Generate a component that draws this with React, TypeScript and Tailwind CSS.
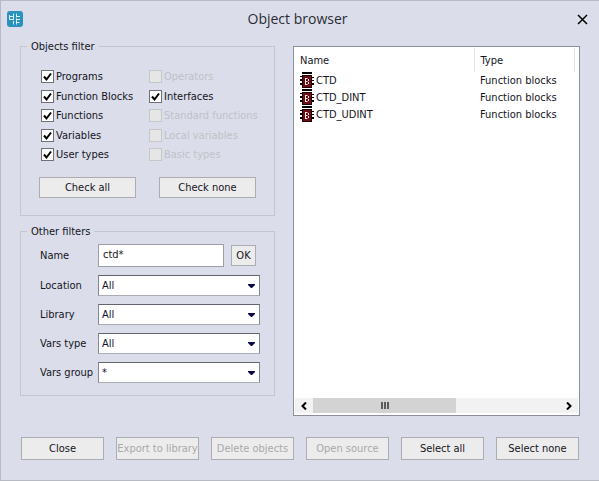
import { useState, type ReactNode } from "react";

const leftKinds = ["Programs", "Function Blocks", "Functions", "Variables", "User types"];
const rightKinds = ["Operators", "Interfaces", "Standard functions", "Local variables", "Basic types"];
const initiallyChecked = [...leftKinds, "Interfaces"];
const isAvailable = (kind: string) => initiallyChecked.includes(kind);

const objects = [
  { name: "CTD", type: "Function blocks" },
  { name: "CTD_DINT", type: "Function blocks" },
  { name: "CTD_UDINT", type: "Function blocks" },
];

const dropDowns = [
  { label: "Location", value: "All" },
  { label: "Library", value: "All" },
  { label: "Vars type", value: "All" },
  { label: "Vars group", value: "*" },
];

const actions = [
  { label: "Close", enabled: true },
  { label: "Export to library", enabled: false },
  { label: "Delete objects", enabled: false },
  { label: "Open source", enabled: false },
  { label: "Select all", enabled: true },
  { label: "Select none", enabled: true },
];

function AppLogo() {
  return (
    <svg width="16" height="16" viewBox="0 0 16 16" aria-hidden="true">
      <rect width="16" height="16" rx="3" fill="#2b91bd" />
      <path
        d="M6.500 2.500V13.500M9.500 2.500V13.500M2.500 4v4.500M2.500 5.500h4M2.500 8.500h4M9.500 5.500h3.500M9.500 8.500h3.500M9.500 11.500h3"
        fill="none"
        stroke="#d9eef7"
      />
      <path d="M5 9.500h2M9 7h1" stroke="#2b91bd" />
    </svg>
  );
}

function BlockIcon() {
  return (
    <svg width="14" height="16" viewBox="0 0 14 16" className="shrink-0" aria-hidden="true">
      <path d="M2 0h10v2H2zM0 4h2v1H0zM0 7h2v2H0zM0 11h2v2H0zM12 5h2v1h-2zM12 8h2v1h-2zM12 11h2v2h-2z" fill="#000" />
      <rect x="2" y="3" width="10" height="13" fill="#1c0003" />
      <rect x="3" y="4" width="8" height="11" fill="#6e0c14" />
      <path d="M5.500 6v7M5 6.500h2.500M5 9.500h2.500M5 12.500h2.500M8.500 7v2M8.500 10v2" fill="none" stroke="#f4e8e8" />
    </svg>
  );
}

function Kind({ name, checked, onToggle }: { name: string; checked: boolean; onToggle: () => void }) {
  return (
    <label className={`flex h-[15px] items-center gap-0.5 whitespace-nowrap ${isAvailable(name) ? "" : "text-[#bfc1c8]"}`}>
      <span className="relative size-[13px] shrink-0">
        <input
          type="checkbox"
          checked={checked}
          disabled={!isAvailable(name)}
          onChange={onToggle}
          className="block size-[13px] appearance-none border border-[#70727a] bg-white disabled:border-[#c6c7c9] disabled:bg-[#e6e6e6]"
        />
        {checked && (
          <svg viewBox="0 0 13 13" className="pointer-events-none absolute inset-0 size-[13px]" aria-hidden="true">
            <path d="M3 6.500l2.500 3L10 3.500" fill="none" stroke="#000" strokeWidth="2" />
          </svg>
        )}
      </span>
      {name}
    </label>
  );
}

function PushButton({ className, disabled, onClick, children }: { className: string; disabled?: boolean; onClick?: () => void; children: ReactNode }) {
  return (
    <button
      type="button"
      disabled={disabled}
      onClick={onClick}
      className={`border border-[#abadb3] bg-[#ececec] text-center whitespace-nowrap disabled:text-[#a9a9ab] ${className}`}
    >
      {children}
    </button>
  );
}

function DropDown({ label, value }: { label: string; value: string }) {
  return (
    <>
      <label htmlFor={label}>{label}</label>
      <div className="relative">
        <select
          id={label}
          defaultValue={value}
          className="block h-[21px] w-full appearance-none border border-t-[#62646e] border-r-[#85878f] border-b-[#abadb5] border-l-[#85878f] bg-white pl-[3px] text-[#101030]"
        >
          <option>{value}</option>
        </select>
        <svg width="7" height="4" viewBox="0 0 7 4" className="pointer-events-none absolute top-[9px] right-[5px]" aria-hidden="true">
          <path d="M0 0h7v1L4 4H3L0 1z" fill="#08084a" />
        </svg>
      </div>
    </>
  );
}

export default function App() {
  const [checked, setChecked] = useState(initiallyChecked);
  const toggle = (kind: string) =>
    setChecked((now) => (now.includes(kind) ? now.filter((k) => k !== kind) : [...now, kind]));

  return (
    <div className="flex min-h-screen flex-col border-y border-l border-[#b7bac3] bg-[#dbdeea] font-['DejaVu_Sans_Condensed','DejaVu_Sans',sans-serif] text-[11px] leading-[15px] text-[#14141c]">
      <header className="grid h-9 grid-cols-[1fr_auto_1fr] items-center pr-[11px] pl-1.5">
        <AppLogo />
        <h1 className="font-['Open_Sans',sans-serif] text-sm leading-5 text-[#2a2c34]">Object browser</h1>
        <button type="button" aria-label="Close window" className="justify-self-end">
          <svg width="11" height="11" viewBox="0 0 11 11" aria-hidden="true">
            <path d="M1 1l9 9M10 1l-9 9" stroke="#000" strokeWidth="1.500" />
          </svg>
        </button>
      </header>

      <main className="flex flex-1 pt-0.5 pr-[19px] pl-[19px]">
        <div className="flex w-[255px] shrink-0 flex-col gap-2">
          <fieldset className="min-w-0 border border-[#c3c6d0] px-[18px] pb-[17px]">
            <legend className="-ml-3 px-1">Objects filter</legend>
            <div className="flex gap-2 pt-[15px] pl-0.5">
              <div className="flex h-[93px] w-[100px] shrink-0 flex-col justify-between">
                {leftKinds.map((kind) => (
                  <Kind key={kind} name={kind} checked={checked.includes(kind)} onToggle={() => toggle(kind)} />
                ))}
              </div>
              <div className="flex h-[93px] flex-col justify-between">
                {rightKinds.map((kind) => (
                  <Kind key={kind} name={kind} checked={checked.includes(kind)} onToggle={() => toggle(kind)} />
                ))}
              </div>
            </div>
            <div className="mt-[15px] grid grid-cols-2 gap-[23px]">
              <PushButton className="h-[21px]" onClick={() => setChecked(initiallyChecked)}>Check all</PushButton>
              <PushButton className="h-[21px]" onClick={() => setChecked([])}>Check none</PushButton>
            </div>
          </fieldset>

          <fieldset className="min-w-0 border border-[#c3c6d0] pr-3.5 pb-3 pl-[19px]">
            <legend className="-ml-[13px] px-1">Other filters</legend>
            <div className="grid grid-cols-[58px_1fr] items-center gap-y-2 pt-[5px]">
              <label htmlFor="name">Name</label>
              <div className="flex items-center gap-[7px] pr-1">
                <input id="name" defaultValue="ctd*" className="h-[23px] w-full min-w-0 flex-1 border border-[#9c9ea8] bg-white px-1 pb-0.5" />
                <PushButton className="h-[21px] w-[25px]">OK</PushButton>
              </div>
              {dropDowns.map((d) => (
                <DropDown key={d.label} label={d.label} value={d.value} />
              ))}
            </div>
          </fieldset>
        </div>

        <section className="mt-[7px] ml-[18px] flex min-w-0 flex-1 flex-col border border-[#8c9099] bg-white pt-px">
          <table className="w-full table-fixed border-collapse text-left">
            <colgroup>
              <col />
              <col className="w-[100px]" />
              <col className="w-[5px]" />
            </colgroup>
            <thead>
              <tr className="h-6">
                <th className="border-r border-[#e2e3e8] pl-1.5 font-normal">Name</th>
                <th className="border-r border-[#e2e3e8] pl-1.5 font-normal">Type</th>
                <td />
              </tr>
            </thead>
            <tbody className="leading-[17px]">
              {objects.map((o) => (
                <tr key={o.name} className="h-[17px]">
                  <td className="p-0 pl-1.5">
                    <span className="flex items-start gap-0.5">
                      <BlockIcon />
                      {o.name}
                    </span>
                  </td>
                  <td className="p-0 pl-1.5 whitespace-nowrap">{o.type}</td>
                  <td />
                </tr>
              ))}
            </tbody>
          </table>
          <div className="mx-px mt-auto mb-0.5 flex h-[15px] items-center bg-[#f2f2f3]">
            <button type="button" aria-label="Scroll left" className="flex w-[18px] justify-center">
              <svg width="6" height="8" viewBox="0 0 6 8" aria-hidden="true">
                <path d="M5 0.500L1.500 4L5 7.500" fill="none" stroke="#000" strokeWidth="2" />
              </svg>
            </button>
            <div className="flex-1">
              <div className="flex h-[15px] w-[58%] items-center justify-center gap-px bg-[#d3d3d4]">
                <span className="h-[7px] w-0.5 bg-[#5c5c60]" />
                <span className="h-[7px] w-0.5 bg-[#5c5c60]" />
                <span className="h-[7px] w-0.5 bg-[#5c5c60]" />
              </div>
            </div>
            <button type="button" aria-label="Scroll right" className="flex w-[18px] justify-center">
              <svg width="6" height="8" viewBox="0 0 6 8" aria-hidden="true">
                <path d="M1 0.500L4.500 4L1 7.500" fill="none" stroke="#000" strokeWidth="2" />
              </svg>
            </button>
          </div>
        </section>
      </main>

      <footer className="grid grid-cols-6 gap-3 px-5 pt-[21px] pb-5">
        {actions.map((a) => (
          <PushButton key={a.label} className="h-[23px]" disabled={!a.enabled}>
            {a.label}
          </PushButton>
        ))}
      </footer>
    </div>
  );
}
